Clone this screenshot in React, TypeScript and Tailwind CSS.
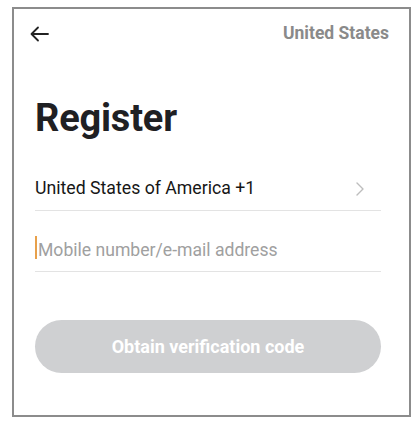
import React from 'react';

export default function App() {
  return (
    <div className="min-h-[424px] w-[420px] bg-white pt-[7px] pl-[12px]" style={{ fontFamily: 'Roboto, "Liberation Sans", sans-serif' }}>
      <div className="flex h-[410px] w-[399px] flex-col border-2 border-[#8c8c8c] bg-white">
        <div className="flex h-[48px] items-center justify-between pl-[16px] pr-[20px] pt-[1px]">
          <svg width="19" height="16" viewBox="0 0 19 16" fill="none" stroke="#222" strokeWidth="1.8" strokeLinecap="round" strokeLinejoin="round">
            <path d="M18 8H2" />
            <path d="M8 1.5L1.5 8L8 14.5" />
          </svg>
          <span className="text-[17.5px] font-bold text-[#8a8a8a]">United States</span>
        </div>
        <div className="pl-[21px] pr-[28px]">
          <h1 className="mt-[39px] text-[38px] font-bold leading-[44px] tracking-[-0.2px] text-[#1f2023]">Register</h1>
          <div className="mt-[17px] flex h-[54px] items-end justify-between border-b border-[#e3e3e3] pb-[8px]">
            <span className="text-[17.7px] text-[#161616]">United States of America +1</span>
            <svg className="mr-[17px] mb-[6px]" width="8" height="14" viewBox="0 0 8 14" fill="none" stroke="#bdbdbd" strokeWidth="1.4" strokeLinecap="round" strokeLinejoin="round">
              <path d="M1 1L7 7L1 13" />
            </svg>
          </div>
          <div className="flex h-[61px] items-end border-b border-[#e3e3e3] pb-[8px]">
            <span className="mr-[1px] mb-[4px] h-[23px] w-[2px] bg-[#e8a04a]" />
            <span className="text-[17.6px] text-[#a0a0a0]">Mobile number/e-mail address</span>
          </div>
          <button className="mt-[48px] flex h-[53px] w-full items-center justify-center rounded-full bg-[#cfd0d2] text-[18px] font-bold text-white">
            Obtain verification code
          </button>
        </div>
      </div>
    </div>
  );
}
